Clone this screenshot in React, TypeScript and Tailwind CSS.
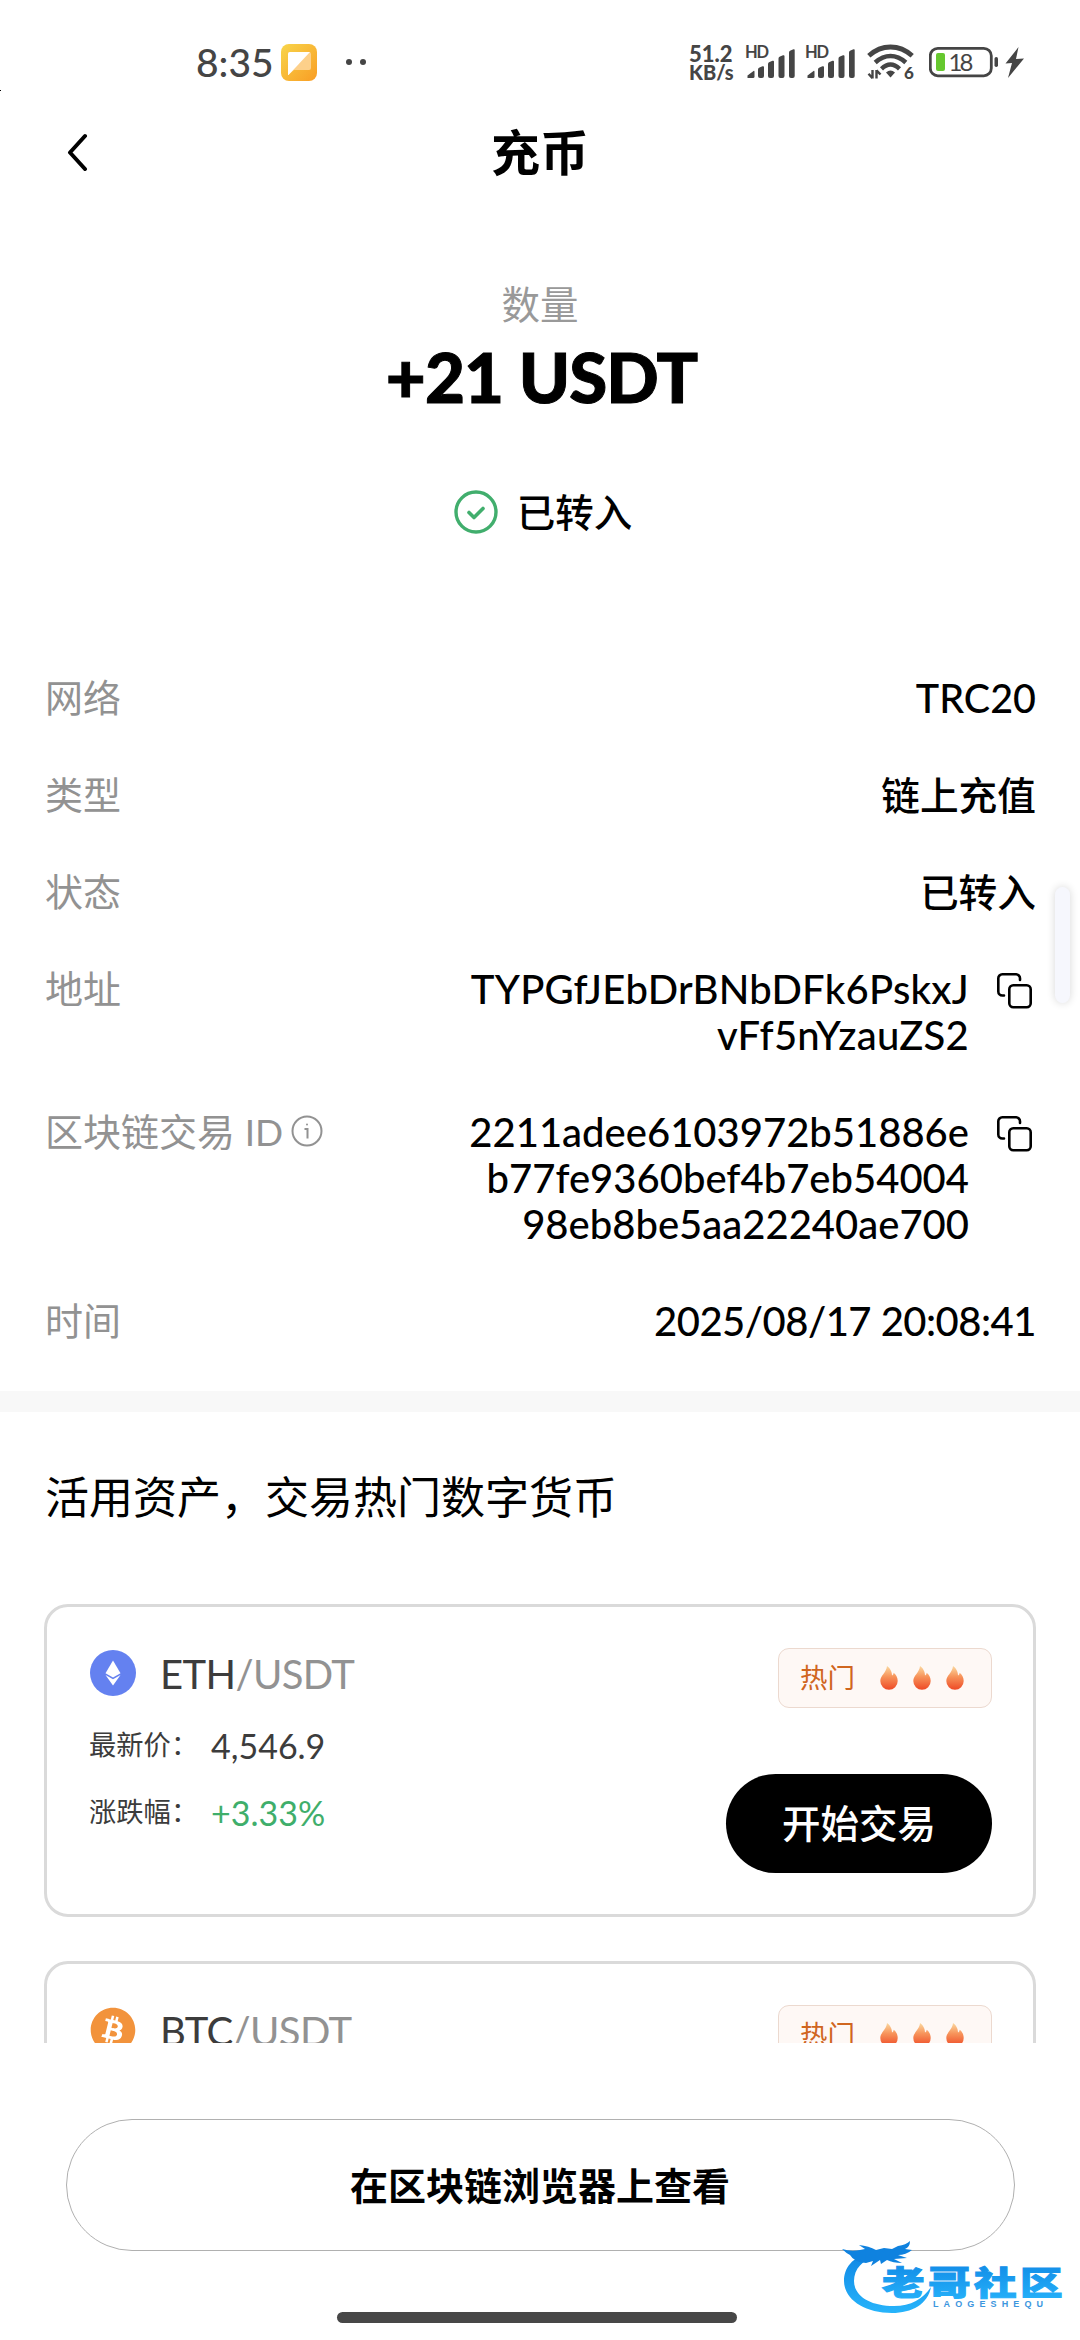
import type { ReactNode } from "react";
import { FaBitcoin } from "react-icons/fa";

function SignalBars() {
  return (
    <svg className="h-[34px] w-[50px] overflow-visible" viewBox="0 0 50 34" fill="#454545">
      <path d="M2.5 33V30.5L8.5 26q1-.6 1 .8V31.500q0 1.500-1.500 1.500z" />
      <path d="M13 24.500q0-1.500 1.500-2l3-1.200q1.500-.6 1.500 1V31q0 2-2 2h-2q-2 0-2-2z" />
      <path d="M23 19q0-1.500 1.500-2l3-1.200q1.500-.6 1.500 1V31q0 2-2 2h-2q-2 0-2-2z" />
      <path d="M33.500 13.500q0-1.500 1.500-2l3-1.200q1.500-.6 1.500 1V31q0 2-2 2h-2q-2 0-2-2z" />
      <path d="M44 7.500q0-1.500 1.500-2l3-1.200q1.200-.6 1.200 1V31q0 2-2 2h-1.700q-2 0-2-2z" />
      <text x="0" y="13" fontFamily="Lato" fontWeight="700" fontSize="16.500" textLength="24">HD</text>
    </svg>
  );
}

function WifiIcon() {
  return (
    <svg className="h-[36px] w-[48px] overflow-visible" viewBox="0 0 48 36" fill="none" stroke="#454545">
      <path d="M1.800 11.800Q11.500 3 23.500 3T45.200 11.800" strokeWidth="4.800" />
      <path d="M8.200 18.500Q15.500 12 23.500 12T38.800 18.500" strokeWidth="4.600" />
      <path d="M14.500 24.800Q19 20.500 23.500 20.500T32.500 24.800" strokeWidth="4.400" />
      <path d="M19 28.500q4.500-3.800 9 0L23.500 33.500z" fill="#454545" stroke="none" />
      <path d="M5.500 26v8.500M5.500 34.200 1.500 29.800M9.500 34.500V26M9.500 26.300l4 4.200" strokeWidth="2.400" />
      <text x="37" y="34.500" fontFamily="Lato" fontWeight="900" fontSize="17" fill="#454545" stroke="none">6</text>
    </svg>
  );
}

function StatusBar() {
  return (
    <div className="flex h-[124px] items-center pl-[196px] pr-[55px] text-[#454545]">
      <span className="w-[85px] text-[39px] leading-[44px] font-medium">8:35</span>
      <svg className="h-[37px] w-[36px]" viewBox="0 0 36 37">
        <defs>
          <linearGradient id="app" x1="0" y1="0" x2="1" y2="1">
            <stop offset="0" stopColor="#f8d54a" />
            <stop offset="1" stopColor="#f99d24" />
          </linearGradient>
        </defs>
        <rect width="36" height="37" rx="8" fill="url(#app)" />
        <path d="M7 10q0-2 2-2H28q2 0 2 2V24q0 2-2 2H13L7 31z" fill="#fdd08a" />
        <path d="M7 10q0-2 2-2H29L7.500 31H7z" fill="#fff" />
      </svg>
      <span className="ml-[29px] h-[6px] w-[6px] rounded-full bg-[#454545]" />
      <span className="ml-[8px] h-[6px] w-[6px] rounded-full bg-[#454545]" />
      <div className="ml-auto flex items-center">
        <div className="w-[56px] pt-[2px] text-[22px] leading-[18px] font-black">
          <div>51.2</div>
          <div className="text-[20px]">KB/s</div>
        </div>
        <SignalBars />
        <span className="w-[10px]" />
        <SignalBars />
        <span className="w-[12px]" />
        <WifiIcon />
        <svg className="ml-[14px] h-[34px] w-[96px]" viewBox="0 0 96 34">
          <rect x="1.300" y="3.300" width="61" height="27.500" rx="7.500" fill="none" stroke="#454545" strokeWidth="2.800" />
          <rect x="7" y="8" width="9" height="18" rx="2" fill="#66c82f" />
          <text x="19.500" y="25.500" fontFamily="Lato" fontSize="24" fill="#454545" textLength="25">18</text>
          <rect x="65.500" y="12" width="3.500" height="10" rx="1.700" fill="#454545" />
          <path d="M89.500 2 76.500 18.500 83 18 79 33 95 13.500 87 14z" fill="#454545" />
        </svg>
      </div>
    </div>
  );
}

function CopyIcon() {
  return (
    <svg className="mt-[7px] mr-[4px] h-[36px] w-[35px]" viewBox="0 0 35 36" fill="none" stroke="#000" strokeWidth="2.600" strokeLinecap="round">
      <path d="M23 7V5.300a4 4 0 0 0-4-4H5.300a4 4 0 0 0-4 4V18.500a4 4 0 0 0 4 4H7" />
      <rect x="12.300" y="12.300" width="21.400" height="22" rx="4" />
    </svg>
  );
}

function Row({ label, children }: { label: ReactNode; children: ReactNode }) {
  return (
    <div className="flex justify-between">
      <div className="flex h-[44px] items-center text-[38px] leading-[44px] text-[#929292]">{label}</div>
      <div className="flex justify-end gap-[28px] text-right text-[38.700px] leading-[46px] font-medium text-black">{children}</div>
    </div>
  );
}

function Flame() {
  return (
    <svg className="h-[24px] w-[18px]" viewBox="0 0 18 24">
      <defs>
        <linearGradient id="flame" x1="0" y1="0" x2="0" y2="1">
          <stop offset="0" stopColor="#fbd9a0" />
          <stop offset=".45" stopColor="#f7935a" />
          <stop offset="1" stopColor="#ee4a26" />
        </linearGradient>
      </defs>
      <path d="M7 0C9.500 1.800 12 5 12 9.500c1-.4 1.600-1.600 1.600-2.800C16 8.300 17.700 11.500 17.700 15A8.700 8.700 0 0 1 .3 15C.3 9.500 6.500 6.500 7 0z" fill="url(#flame)" />
    </svg>
  );
}

function EthIcon() {
  return (
    <svg className="h-[46px] w-[46px]" viewBox="0 0 46 46">
      <circle cx="23" cy="23" r="23" fill="#6481f0" />
      <path d="M23 10.500 15.500 23.300 23 27.600l7.500-4.300z" fill="#fff" />
      <path d="M15.500 25 23 29.300 30.500 25 23 35.600z" fill="#fff" />
    </svg>
  );
}

function PairCard({ icon, base, price, change }: { icon: ReactNode; base: string; price: string; change: string }) {
  return (
    <div className="flex h-[313px] shrink-0 justify-between rounded-[24px] border-[3px] border-[#dadada] pr-[41px] pl-[42px] text-[#3c3c3c]">
      <div className="flex flex-col pt-[43px]">
        <div className="flex h-[46px] items-center pl-px">
          {icon}
          <span className="ml-[24px] pt-[2px] text-[40px] leading-[46px] tracking-[-0.6px]">
            {base}
            <span className="text-[#929292]">/USDT</span>
          </span>
        </div>
        <div className="mt-[29px] flex h-[40px] items-center">
          <span className="w-[122px] text-[27.300px]">最新价：</span>
          <span className="text-[34px]">{price}</span>
        </div>
        <div className="mt-[27px] flex h-[40px] items-center">
          <span className="w-[122px] text-[27.300px]">涨跌幅：</span>
          <span className="text-[34px] text-[#3fae6b]">{change}</span>
        </div>
      </div>
      <div className="flex flex-col items-end pt-[41px]">
        <div className="flex h-[60px] w-[214px] items-center rounded-[11px] border border-[#ecd9cf] bg-[#fef8f5] pl-[21px] text-[27.500px] text-[#d0661f]">
          <span className="w-[80px]">热门</span>
          <div className="flex gap-[15px]">
            <Flame />
            <Flame />
            <Flame />
          </div>
        </div>
        <button className="mt-[66px] flex h-[99px] w-[266px] items-center justify-center rounded-full bg-black text-[38.500px] font-medium text-white">
          开始交易
        </button>
      </div>
    </div>
  );
}

function Watermark() {
  return (
    <svg className="absolute top-[2235px] left-[830px] h-[105px] w-[250px]" viewBox="0 0 250 105">
      <defs>
        <linearGradient id="wm" x1="0" y1="0" x2="0" y2="1">
          <stop offset="0" stopColor="#0f86e4" />
          <stop offset="1" stopColor="#27b4fb" />
        </linearGradient>
      </defs>
      <path d="M40 18C22 22 14 33 14 46c0 18 20 32 48 32 20 0 36-9 39-26-8 12-20 19-37 19-24 0-40-10-40-25 0-12 8-21 24-26z" fill="url(#wm)" />
      <path d="M12 14q9 3 18 1l5-1-6-4q10 1 17 5l8-2 8 1 6-3q8-1 12-5 0 6-5 8l7 1q-6 5-14 5l9 3-13 1 8 4q-9 0-15-3l-6 4-1-4-9 6 2-5-7 2q-12-1-16-8-4-2-8-6z" fill="#0f82df" />
      <text x="0" y="0" fontFamily="Noto Sans CJK SC" fontWeight="900" fontSize="33" fill="url(#wm)" stroke="url(#wm)" strokeWidth="1" textLength="140" transform="translate(52 60) scale(1.290 1)">
        老哥社区
      </text>
      <text x="103" y="71.500" fontFamily="Liberation Sans" fontWeight="700" fontSize="9" fill="#3d96de" textLength="110">
        LAOGESHEQU
      </text>
    </svg>
  );
}

export default function App() {
  return (
    <div className="relative flex h-[2340px] w-[1080px] flex-col overflow-hidden bg-white font-['Lato','Noto_Sans_CJK_SC',sans-serif]">
      <StatusBar />
      <header className="grid h-[54px] grid-cols-[1fr_auto_1fr] items-center pl-[66px] pr-[66px]">
        <svg className="h-[38px] w-[22px]" viewBox="0 0 22 38" fill="none" stroke="#000" strokeWidth="4" strokeLinecap="round" strokeLinejoin="round">
          <path d="M19 3 4 19.500 19 36" />
        </svg>
        <h1 className="pt-px text-[49px] leading-[54px] font-bold">充币</h1>
        <span />
      </header>

      <section className="mt-[103px] flex flex-col items-center">
        <div className="h-[46px] text-[38.500px] leading-[46px] text-[#999]">数量</div>
        <div className="h-[100px] pl-[3px] text-[69px] leading-[100px] font-black tracking-[-0.9px] [-webkit-text-stroke:1px_#000]">+21 USDT</div>
        <div className="mt-[62px] flex h-[46px] items-center gap-[19px] pl-[6px]">
          <svg className="h-[44px] w-[44px]" viewBox="0 0 44 44" fill="none" stroke="#41ae6d" strokeLinecap="round" strokeLinejoin="round">
            <circle cx="22" cy="22" r="20" strokeWidth="3.400" />
            <path d="M15 22.500l5 5 9-9" strokeWidth="3.600" />
          </svg>
          <span className="text-[38.500px] leading-[46px] font-medium">已转入</span>
        </div>
      </section>

      <section className="mt-[140px] flex flex-col gap-[51px] pr-[44px] pl-[45px]">
        <Row label="网络">
          <span className="text-[39.500px]">TRC20</span>
        </Row>
        <Row label="类型">链上充值</Row>
        <Row label="状态">已转入</Row>
        <Row label="地址">
          <div className="text-[40px] tracking-[0.250px]">
            TYPGfJEbDrBNbDFk6PskxJ
            <br />
            vFf5nYzauZS2
          </div>
          <CopyIcon />
        </Row>
        <Row
          label={
            <>
              <span>
                区块链交易 <span className="text-[37px]">ID</span>
              </span>
              <svg className="ml-[8px] h-[32px] w-[32px]" viewBox="0 0 32 32" fill="none" stroke="#929292" strokeWidth="2">
                <circle cx="16" cy="16" r="14.500" />
                <path d="M13.500 14H16.500V23.500" />
                <circle cx="16" cy="9.500" r="1" fill="#929292" stroke="none" />
              </svg>
            </>
          }
        >
          <div className="text-[40px]">
            2211adee6103972b51886e
            <br />
            b77fe9360bef4b7eb54004
            <br />
            98eb8be5aa22240ae700
          </div>
          <CopyIcon />
        </Row>
        <Row label="时间">
          <span className="text-[40px] tracking-[-0.500px]">2025/08/17 20:08:41</span>
        </Row>
      </section>

      <div className="mt-[47px] h-[21px] shrink-0 bg-[#f8f8f8]" />

      <section className="flex h-[631px] shrink-0 flex-col overflow-hidden px-[44px] pt-[55px]">
        <h2 className="h-[60px] shrink-0 pl-px text-[44px] leading-[60px]">活用资产，交易热门数字货币</h2>
        <div className="mt-[77px] flex flex-col gap-[44px]">
          <PairCard icon={<EthIcon />} base="ETH" price="4,546.9" change="+3.33%" />
          <PairCard icon={<FaBitcoin className="h-[46px] w-[46px] text-[#f2933c]" />} base="BTC" price="117,652.3" change="+0.12%" />
        </div>
      </section>

      <footer className="flex flex-col items-center pt-[76px]">
        <button className="h-[132px] w-[949px] rounded-full border border-[#b0b0b0] text-[38px] font-bold">在区块链浏览器上查看</button>
        <div className="mt-[61px] mr-[6px] h-[11px] w-[400px] rounded-full bg-[#474747]" />
      </footer>

      <div className="absolute top-[887px] left-[1055px] h-[116px] w-[15px] rounded-full bg-[#f6f7fd] shadow-[0_0_8px_rgba(0,0,0,0.16)]" />
      <div className="absolute top-[90px] left-0 h-px w-px bg-black" />
      <Watermark />
    </div>
  );
}
